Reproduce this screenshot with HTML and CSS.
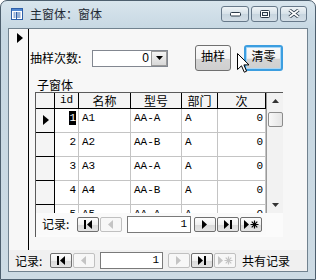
FILE: index.html
```html
<!DOCTYPE html>
<html lang="zh">
  <head>
    <meta charset="UTF-8" />
    <title>主窗体：窗体</title>
    <link rel="stylesheet" href="styles.css">
  </head>
  <body>
    <div class="window">
      <div class="titlebar">
        <svg class="app-icon" width="12" height="12" viewBox="0 0 12 12">
          <rect x="0.5" y="0.5" width="11" height="11" fill="#fff" stroke="#2d5fa8" />
          <rect x="1" y="1" width="10" height="2" fill="#4f86d0" />
          <path d="M2.5 5h2M2.5 7h2M2.5 9h2M6 5h3.5M6 7h3.5M6 9h3.5" stroke="#2d5fa8" />
          <path d="M5.5 4v7" stroke="#2d5fa8" />
        </svg>
        <span class="title">主窗体：窗体</span>
        <div class="caption-buttons">
          <span class="cap-btn">
            <svg width="11" height="6" viewBox="0 0 11 6"><rect x="0.5" y="1.5" width="10" height="3.5" rx="1" fill="#fff" stroke="#2b3a48" /></svg>
          </span>
          <span class="cap-btn">
            <svg width="10" height="8" viewBox="0 0 10 8"><rect x="0.5" y="0.5" width="9" height="7" rx="1" fill="#fff" stroke="#2b3a48" /><rect x="2.5" y="2.5" width="5" height="3" fill="#e6edf2" stroke="#2b3a48" /></svg>
          </span>
          <span class="cap-btn">
            <svg width="12" height="9" viewBox="0 0 12 9"><path d="M1.5 1 L10.5 8 M10.5 1 L1.5 8" stroke="#2b3a48" stroke-width="3.4" /><path d="M1.5 1 L10.5 8 M10.5 1 L1.5 8" stroke="#fff" stroke-width="1.6" /></svg>
          </span>
        </div>
      </div>

      <div class="client">
        <div class="form-body">
          <div class="selector"><span class="selector-arrow"></span></div>
          <div class="detail">
            <div class="field-row">
              <span class="field-label">抽样次数:</span>
              <div class="combo">
                <span class="combo-value">0</span>
                <span class="combo-btn">
                  <svg width="7" height="4" viewBox="0 0 7 4"><path d="M0 0h7L3.5 4z" fill="#000" /></svg>
                </span>
              </div>
              <button class="cmd">抽样</button>
              <button class="cmd cmd-focused">清零</button>
            </div>

            <div class="sub-label">子窗体</div>
            <div class="subform">
              <div class="sheet-wrap">
                <div class="sheet">
                  <div class="sheet-row sheet-head">
                    <div class="cell sel"></div>
                    <div class="cell mono">id</div>
                    <div class="cell">名称</div>
                    <div class="cell">型号</div>
                    <div class="cell">部门</div>
                    <div class="cell">次</div>
                  </div>
                  <div class="sheet-row">
                    <div class="cell sel"><span class="row-arrow"></span></div>
                    <div class="cell num"><span class="picked">1</span></div>
                    <div class="cell">A1</div>
                    <div class="cell">AA-A</div>
                    <div class="cell">A</div>
                    <div class="cell num">0</div>
                  </div>
                  <div class="sheet-row">
                    <div class="cell sel"></div>
                    <div class="cell num">2</div>
                    <div class="cell">A2</div>
                    <div class="cell">AA-B</div>
                    <div class="cell">A</div>
                    <div class="cell num">0</div>
                  </div>
                  <div class="sheet-row">
                    <div class="cell sel"></div>
                    <div class="cell num">3</div>
                    <div class="cell">A3</div>
                    <div class="cell">AA-A</div>
                    <div class="cell">A</div>
                    <div class="cell num">0</div>
                  </div>
                  <div class="sheet-row">
                    <div class="cell sel"></div>
                    <div class="cell num">4</div>
                    <div class="cell">A4</div>
                    <div class="cell">AA-B</div>
                    <div class="cell">A</div>
                    <div class="cell num">0</div>
                  </div>
                  <div class="sheet-row">
                    <div class="cell sel"></div>
                    <div class="cell num">5</div>
                    <div class="cell">A5</div>
                    <div class="cell">AA-A</div>
                    <div class="cell">A</div>
                    <div class="cell num">0</div>
                  </div>
                </div>
                <div class="vscroll">
                  <span class="scroll-arrow">
                    <svg width="7" height="4" viewBox="0 0 7 4"><path d="M0 4h7L3.5 0z" fill="#333" /></svg>
                  </span>
                  <span class="scroll-thumb"></span>
                  <span class="scroll-space"></span>
                  <span class="scroll-arrow">
                    <svg width="7" height="4" viewBox="0 0 7 4"><path d="M0 0h7L3.5 4z" fill="#333" /></svg>
                  </span>
                </div>
              </div>

              <div class="nav sub-nav">
                <span class="nav-label">记录:</span>
                <span class="nav-btn">
                  <svg width="9" height="9" viewBox="0 0 9 9"><rect x="0" y="0" width="2" height="9" /><path d="M8 0L3 4.5L8 9z" /></svg>
                </span>
                <span class="nav-btn off">
                  <svg width="6" height="9" viewBox="0 0 6 9"><path d="M5 0L0 4.5L5 9z" /></svg>
                </span>
                <span class="nav-box">1</span>
                <span class="nav-btn">
                  <svg width="6" height="9" viewBox="0 0 6 9"><path d="M0 0L5 4.5L0 9z" /></svg>
                </span>
                <span class="nav-btn">
                  <svg width="9" height="9" viewBox="0 0 9 9"><path d="M0 0L5 4.5L0 9z" /><rect x="6" y="0" width="2" height="9" /></svg>
                </span>
                <span class="nav-btn">
                  <svg width="15" height="9" viewBox="0 0 15 9"><path d="M0 0L5 4.5L0 9z" /><path d="M10.5 0.5v8M6.5 4.5h8M7.7 1.7l5.6 5.6M13.3 1.7l-5.6 5.6" stroke="#000" stroke-width="1.2" /></svg>
                </span>
              </div>
            </div>
          </div>
        </div>

        <div class="nav main-nav">
          <span class="nav-label">记录:</span>
          <span class="nav-btn">
            <svg width="9" height="9" viewBox="0 0 9 9"><rect x="0" y="0" width="2" height="9" /><path d="M8 0L3 4.5L8 9z" /></svg>
          </span>
          <span class="nav-btn off">
            <svg width="6" height="9" viewBox="0 0 6 9"><path d="M5 0L0 4.5L5 9z" /></svg>
          </span>
          <span class="nav-box">1</span>
          <span class="nav-btn off">
            <svg width="6" height="9" viewBox="0 0 6 9"><path d="M0 0L5 4.5L0 9z" /></svg>
          </span>
          <span class="nav-btn">
            <svg width="9" height="9" viewBox="0 0 9 9"><path d="M0 0L5 4.5L0 9z" /><rect x="6" y="0" width="2" height="9" /></svg>
          </span>
          <span class="nav-btn off">
            <svg width="15" height="9" viewBox="0 0 15 9"><path d="M0 0L5 4.5L0 9z" /><path d="M10.5 0.5v8M6.5 4.5h8M7.7 1.7l5.6 5.6M13.3 1.7l-5.6 5.6" stroke="#c4c4c4" stroke-width="1.2" /></svg>
          </span>
          <span class="nav-total">共有记录</span>
        </div>
      </div>

      <!-- mouse pointer sitting over the 清零 button -->
      <svg class="pointer" width="13" height="20" viewBox="0 0 13 20">
        <path d="M0.5 0.5V16.5L4.5 12.8L7.3 19.2L9.6 18.2L6.9 11.9H12z" fill="#fff" stroke="#000" stroke-linejoin="round" />
      </svg>
    </div>
  </body>
</html>
```

FILE: styles.css
```css
body {
  margin: 0;
  width: 316px;
  height: 280px;
  overflow: hidden;
  font-family: "Noto Sans CJK SC", "DejaVu Sans", sans-serif;
  font-size: 12px;
  color: #000;
}

.window {
  position: relative;
  box-sizing: border-box;
  width: 316px;
  height: 280px;
  border: 1px solid #4d5f6e;
  border-radius: 7px 7px 0 0;
  background: linear-gradient(#d8e5ed, #c6d7e2 30px, #cddbe4);
  display: flex;
  flex-direction: column;
}

/* title bar */
.titlebar {
  height: 27px;
  display: flex;
  align-items: center;
  padding-left: 10px;
  flex-shrink: 0;
}

.app-icon {
  margin-top: -2px;
}

.title {
  margin-left: 7px;
  margin-top: -2px;
  color: #1f2a34;
  line-height: 14px;
}

.caption-buttons {
  margin-left: auto;
  margin-right: 8px;
  margin-top: -2px;
  display: flex;
  gap: 2px;
}

.cap-btn {
  box-sizing: border-box;
  width: 28px;
  height: 16px;
  border: 1px solid #67798a;
  border-radius: 3px;
  background: linear-gradient(#eef3f6, #d6e1e8 50%, #c7d5df 51%, #d3dee6);
  display: flex;
  align-items: center;
  justify-content: center;
}

.cap-btn + .cap-btn {
  width: 27px;
}

/* client area */
.client {
  box-sizing: border-box;
  margin: 0 7px;
  height: 244px;
  border: 1px solid #71828f;
  background: #f0f0f0;
  display: flex;
  flex-direction: column;
}

.form-body {
  height: 221px;
  display: flex;
  background: #f7f7f7;
}

.selector {
  width: 19px;
  border-right: 1px solid #000;
  flex-shrink: 0;
}

.selector-arrow {
  display: block;
  margin: 4px 0 0 8px;
  width: 0;
  height: 0;
  border-top: 5.5px solid transparent;
  border-bottom: 5.5px solid transparent;
  border-left: 6px solid #000;
}

.detail {
  flex: 1;
}

.field-row {
  margin-top: 16px;
  height: 26px;
  display: flex;
  align-items: center;
}

.field-label {
  width: 62px;
  padding-left: 1px;
  line-height: 14px;
}

.combo {
  box-sizing: border-box;
  width: 76px;
  height: 17px;
  border: 1px solid #828790;
  background: #fff;
  display: flex;
}

.combo-value {
  flex: 1;
  text-align: right;
  padding-right: 2px;
  font-family: "Liberation Sans", sans-serif;
  font-size: 12px;
  line-height: 15px;
}

.combo-btn {
  box-sizing: border-box;
  width: 16px;
  border: 1px solid #9a9a9a;
  background: linear-gradient(#f4f4f4, #d8d8d8);
  display: flex;
  align-items: center;
  justify-content: center;
}

.cmd {
  box-sizing: border-box;
  height: 26px;
  width: 36px;
  margin-left: 27px;
  padding: 0 0 6px;
  border: 1px solid #707070;
  border-radius: 3px;
  background: linear-gradient(#fafafa, #f2f2f2 52%, #d5d5d5 53%, #cfcfcf);
  font-family: inherit;
  font-size: 12px;
  color: #000;
}

.cmd-focused {
  width: 39px;
  margin-left: 13px;
  border: 2px solid #3c9ee0;
  box-shadow: inset 0 0 0 1px #a6d6f6;
}

.sub-label {
  margin-top: 7px;
  padding-left: 8px;
  height: 14px;
  line-height: 14px;
}

/* subform */
.subform {
  margin-left: 6px;
  width: 248px;
  height: 145px;
  box-sizing: border-box;
  border-left: 1px solid #5a5a5a;
  border-top: 1px solid #5a5a5a;
  background: #fbfbfb;
}

.sheet-wrap {
  height: 120px;
  display: flex;
  overflow: hidden;
}

.sheet {
  width: 230px;
  background: #fff;
}

.sheet-row {
  display: grid;
  grid-template-columns: 19px 24px 52px 51px 36px 48px;
  height: 24px;
}

.cell {
  box-sizing: border-box;
  border-right: 1px solid #c4c4c4;
  border-bottom: 1px solid #c4c4c4;
  padding: 3px 0 0 3px;
  font-family: "Liberation Mono", monospace;
  font-size: 11px;
  line-height: 13px;
  white-space: nowrap;
}

.cell.num {
  text-align: right;
  padding: 3px 2px 0 0;
}

.cell.sel {
  background: #f4f4f4;
  border-right-color: #000;
  border-bottom-color: #000;
  padding: 0;
}

.sheet-head {
  height: 16px;
}

.sheet-head .cell {
  border-right-color: #000;
  border-bottom: 1px solid #000;
  padding: 0;
  text-align: center;
  font-family: "Noto Sans CJK SC", sans-serif;
  font-size: 12px;
  line-height: 15px;
  background: #f4f4f4;
}

.sheet-head .cell.mono {
  font-family: "Liberation Mono", monospace;
  font-size: 11px;
}

.picked {
  background: #000;
  color: #fff;
  padding: 1px 0;
}

.row-arrow {
  display: block;
  margin: 6px 0 0 7px;
  width: 0;
  height: 0;
  border-top: 5.5px solid transparent;
  border-bottom: 5.5px solid transparent;
  border-left: 6px solid #000;
}

.vscroll {
  width: 17px;
  box-sizing: border-box;
  border-left: 1px solid #9a9a9a;
  background: #f2f2f2;
  display: flex;
  flex-direction: column;
  align-items: center;
}

.scroll-arrow {
  height: 16px;
  display: flex;
  align-items: center;
  justify-content: center;
}

.scroll-thumb {
  box-sizing: border-box;
  margin-top: 3px;
  width: 15px;
  height: 15px;
  border: 1px solid #8c8c8c;
  border-radius: 2px;
  background: linear-gradient(90deg, #f8f8f8, #e4e4e4);
}

.scroll-space {
  flex: 1;
}

/* record navigation bars */
.nav {
  display: flex;
  align-items: center;
  height: 22px;
  font-size: 12px;
}

.sub-nav {
  width: 230px;
  padding-left: 6px;
  box-sizing: border-box;
  background: #fafafa;
}

.main-nav {
  padding-left: 6px;
  height: 21px;
  background: #f0f0f0;
}

.nav-label {
  width: 35px;
  line-height: 14px;
}

.nav-btn {
  box-sizing: border-box;
  width: 22px;
  height: 15px;
  margin-right: 1px;
  border: 1px solid #6f6f6f;
  border-radius: 2px;
  background: linear-gradient(#fdfdfd, #f0f0f0 50%, #dadada 51%, #e4e4e4);
  display: flex;
  align-items: center;
  justify-content: center;
  fill: #000;
}

.nav-btn.off {
  border-color: #c0c0c0;
  background: #f7f7f7;
  fill: #c4c4c4;
}

.nav-box {
  box-sizing: border-box;
  width: 64px;
  height: 17px;
  margin: 0 3px 0 4px;
  border: 1px solid #7a7a7a;
  background: #fff;
  text-align: right;
  padding-right: 3px;
  font-family: "Liberation Mono", monospace;
  font-size: 11px;
  line-height: 15px;
}

.main-nav .nav-box {
  width: 63px;
  margin-right: 5px;
}

.nav-total {
  margin-left: 5px;
  line-height: 14px;
}

.pointer {
  position: absolute;
  left: 236px;
  top: 52px;
}
```
